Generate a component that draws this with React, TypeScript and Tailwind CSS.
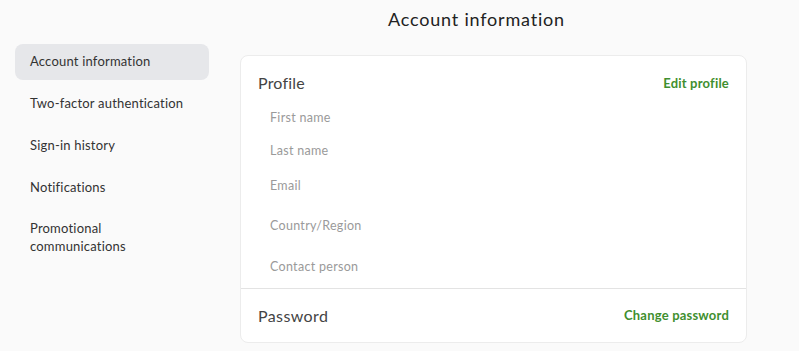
const navItems = [
  "Account information",
  "Two-factor authentication",
  "Sign-in history",
  "Notifications",
];

const fields = [
  { label: "First name", h: "h-[33px]" },
  { label: "Last name", h: "h-[33px]" },
  { label: "Email", h: "h-[37px]" },
  { label: "Country/Region", h: "h-[42px]" },
  { label: "Contact person", h: "h-[41px]" },
];

export default function App() {
  return (
    <div className="h-[351px] w-[799px] overflow-hidden bg-[#fafafa] font-['Lato',sans-serif] text-[#333]">
      <div className="flex h-[39px] items-center pl-[388px] text-[18px] tracking-[0.8px] text-[#222]">
        Account information
      </div>
      <div className="flex gap-[31px] pl-[15px]">
        <nav className="mt-[5px] flex w-[194px] flex-col gap-[6px]">
          {navItems.map((item, i) => (
            <div
              key={item}
              className={`flex h-[36px] items-center rounded-lg px-[15px] text-[13px] tracking-[0.2px] ${
                i === 0 ? "bg-[#e6e7ea]" : ""
              }`}
            >
              {item}
            </div>
          ))}
          <div className="px-[15px] pt-[7px] text-[13px] leading-[18px] tracking-[0.2px]">
            Promotional
            <br />
            communications
          </div>
        </nav>
        <div className="mt-[16px] w-[507px] rounded-lg border border-[#ececec] bg-white">
          <div className="flex h-[46px] items-end justify-between px-[17px] pb-[9px]">
            <span className="text-[16px] leading-[20px] tracking-[0.2px] text-[#444]">Profile</span>
            <span className="text-[13px] font-bold leading-[20px] tracking-[0.2px] text-[#3f8f2f]">
              Edit profile
            </span>
          </div>
          <div>
            {fields.map((f) => (
              <div
                key={f.label}
                className={`flex items-center pl-[29px] text-[12.5px] tracking-[0.3px] text-[#9a9a9a] ${f.h}`}
              >
                {f.label}
              </div>
            ))}
          </div>
          <div className="flex h-[54px] items-center justify-between border-t border-[#e3e3e3] px-[17px]">
            <span className="text-[16px] tracking-[0.4px] text-[#444]">Password</span>
            <span className="text-[13px] font-bold tracking-[0.2px] text-[#3f8f2f]">
              Change password
            </span>
          </div>
        </div>
      </div>
    </div>
  );
}
